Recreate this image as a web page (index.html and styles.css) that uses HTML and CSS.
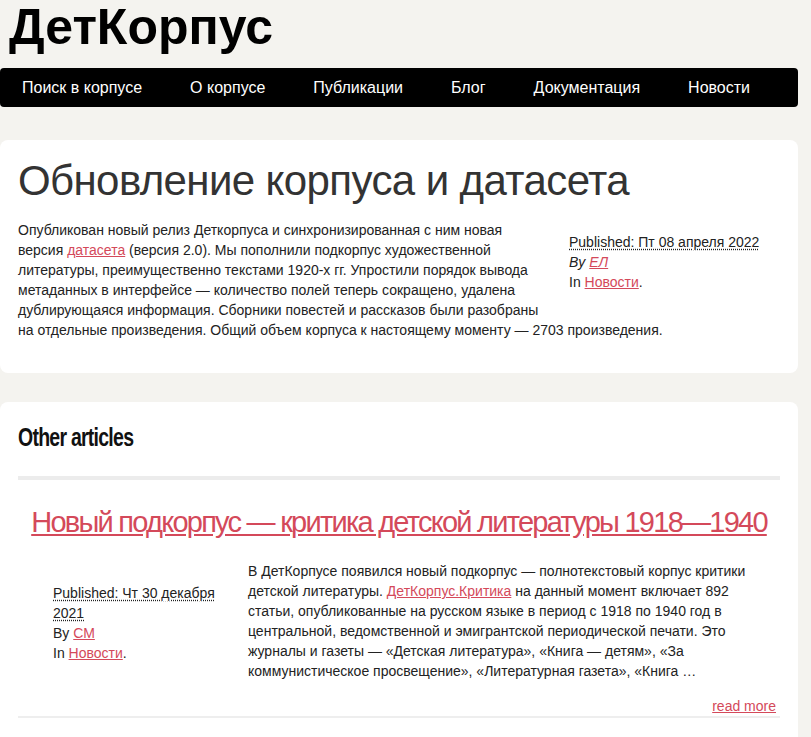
FILE: index.html
```html
<!DOCTYPE html>
<html lang="ru">
<head>
<meta charset="utf-8">
<title>ДетКорпус</title>
<link rel="stylesheet" href="styles.css">
</head>
<body>
<div class="page">
  <header class="site-header">
    <h1 class="site-title">ДетКорпус</h1>
    <nav class="nav">
      <a href="#">Поиск в корпусе</a>
      <a href="#">О корпусе</a>
      <a href="#">Публикации</a>
      <a href="#">Блог</a>
      <a href="#">Документация</a>
      <a href="#">Новости</a>
    </nav>
  </header>

  <article class="card post">
    <h2 class="post-title">Обновление корпуса и датасета</h2>
    <div class="post-body">
      <aside class="post-meta">
        <div><abbr class="published" title="2022-04-08">Published: Пт 08 апреля 2022</abbr></div>
        <address class="author">By <a href="#">ЕЛ</a></address>
        <div>In <a href="#">Новости</a>.</div>
      </aside>
      <p>Опубликован новый релиз Деткорпуса и синхронизированная с ним новая версия <a href="#">датасета</a> (версия 2.0). Мы пополнили подкорпус художественной литературы, преимущественно текстами 1920-х гг. Упростили порядок вывода метаданных в интерфейсе — количество полей теперь сокращено, удалена дублирующаяся информация. Сборники повестей и рассказов были разобраны на отдельные произведения. Общий объем корпуса к настоящему моменту — 2703 произведения.</p>
    </div>
  </article>

  <section class="card others">
    <h2 class="others-title"><span class="others-text">Other articles</span></h2>
    <hr class="thick-rule">
    <article class="entry">
      <h3 class="entry-title"><a href="#">Новый подкорпус — критика детской литературы 1918—1940</a></h3>
      <div class="entry-row">
        <div class="entry-meta">
          <div><abbr class="published" title="2021-12-30">Published: Чт 30 декабря 2021</abbr></div>
          <div>By <a href="#">СМ</a></div>
          <div>In <a href="#">Новости</a>.</div>
        </div>
        <div class="entry-summary">
          <p>В ДетКорпусе появился новый подкорпус — полнотекстовый корпус критики детской литературы. <a href="#">ДетКорпус.Критика</a> на данный момент включает 892 статьи, опубликованные на русском языке в период с 1918 по 1940 год в центральной, ведомственной и эмигрантской периодической печати. Это журналы и газеты — «Детская литература», «Книга — детям», «За коммунистическое просвещение», «Литературная газета», «Книга …</p>
        </div>
      </div>
      <div class="read-more"><a href="#">read more</a></div>
      <hr class="thin-rule">
    </article>
  </section>
</div>
</body>
</html>
```

FILE: styles.css
```css
html, body {
  margin: 0;
  padding: 0;
  background: #f4f3ef;
}
body {
  font-family: "Liberation Sans", Arial, sans-serif;
  font-size: 14px;
  line-height: 20px;
  color: #222;
}
a {
  color: #d4495a;
  text-decoration: underline;
}
.page {
  width: 798px;
}
.site-title {
  margin: 0 0 0 9px;
  font-size: 50px;
  line-height: 55px;
  font-weight: bold;
  color: #000;
}
.nav {
  margin-top: 13px;
  height: 39px;
  background: #000;
  border-radius: 4px;
  display: flex;
  align-items: center;
  gap: 48px;
  padding-left: 22px;
}
.nav a {
  color: #fff;
  text-decoration: none;
  font-size: 16px;
  line-height: 20px;
}
.card {
  background: #fff;
  border-radius: 8px;
  padding: 18px 18px 0 18px;
}
.post {
  margin-top: 33px;
  padding-bottom: 19px;
}
.post-title {
  margin: 0;
  font-size: 42px;
  line-height: 46px;
  font-weight: normal;
  letter-spacing: -0.6px;
  color: #333;
}
.post-body {
  margin-top: 16px;
}
.post-body p {
  margin: 0 0 14px 0;
}
.post-meta {
  float: right;
  width: 211px;
  margin: 12px 0 18px 24px;
}
.published {
  text-decoration: underline dotted;
  text-underline-offset: 2px;
}
.author {
  font-style: italic;
}
.others {
  margin-top: 29px;
  min-height: 400px;
}
.others-title {
  margin: 2px 0 0 0;
  font-size: 26px;
  line-height: 30px;
  font-weight: bold;
  color: #111;
}
.others-text {
  display: inline-block;
  letter-spacing: -1px;
  transform: scaleX(0.75);
  transform-origin: left center;
}
.thick-rule {
  margin: 24px 0 0 0;
  border: 0;
  height: 4px;
  background: #ececec;
}
.entry-title {
  margin: 24px 0 0 0;
  text-align: center;
  font-size: 29px;
  line-height: 36px;
  font-weight: normal;
  letter-spacing: -1.75px;
}
.entry-row {
  display: grid;
  grid-template-columns: 230px 1fr;
  margin-top: 21px;
}
.entry-meta {
  align-self: center;
  padding: 4px 15px 0 35px;
}
.entry-summary {
  padding-right: 14px;
}
.entry-summary p {
  margin: 0;
}
.read-more {
  margin-top: 15px;
  text-align: right;
  padding-right: 4px;
}
.thin-rule {
  margin: 0;
  border: 0;
  height: 2px;
  background: #eeeeee;
}
```
